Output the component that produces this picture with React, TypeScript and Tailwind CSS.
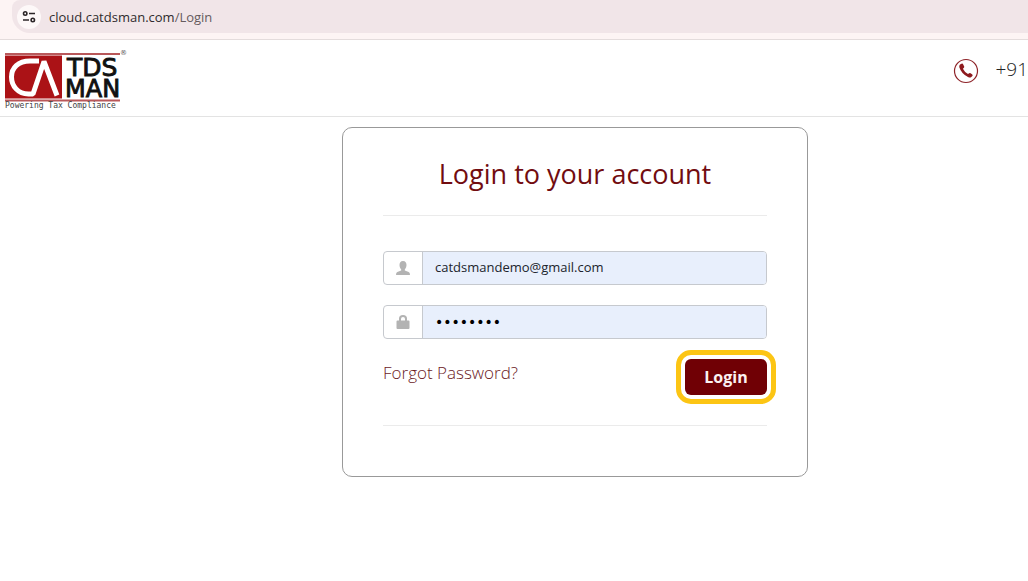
import type { ReactNode } from "react";

function BrowserBar() {
  return (
    <div className="h-10 border-b border-[#e4dcdc] bg-[#fdf4f4]">
      <div className="ml-3 flex h-[33px] items-center gap-2 rounded-tl-[8px] rounded-bl-[18px] bg-[#f1e5e8] pl-[5px]">
        <button type="button" aria-label="View site information" className="flex size-6 items-center justify-center rounded-full bg-[#fdf8f8]">
          <svg viewBox="0 0 14 14" className="size-[14px]" fill="none" stroke="#2b2527" strokeWidth="1.6">
            <circle cx="3.2" cy="3.500" r="1.7" />
            <path d="M7 3.500h6M1 10h6" />
            <circle cx="10.8" cy="10" r="1.7" />
          </svg>
        </button>
        <span className="text-[13px] leading-5 text-[#2f2b2d]">
          cloud.catdsman.com<span className="text-[#655b5e]">/Login</span>
        </span>
      </div>
    </div>
  );
}

function Logo() {
  return (
    <svg viewBox="0 0 124 62" className="h-[62px] w-[124px]" role="img" aria-label="CA TDS Man, Powering Tax Compliance">
      <rect x="1" y="5" width="115" height="2" fill="#b9585a" />
      <rect x="1" y="7.500" width="57" height="43" fill="#ab1216" />
      <rect x="1" y="51.500" width="115" height="2" fill="#b9585a" />
      <path d="M35 13H26C14 13 7.500 20 7.500 29S14 46 24.500 46H29L40 13.500L53 47.500" fill="none" stroke="#fff" strokeWidth="5" strokeLinejoin="bevel" />
      <g fontFamily="'DejaVu Sans', sans-serif" fill="#111">
        <g stroke="#111" strokeWidth="0.9">
          <text x="63" y="28" fontSize="25">TDS</text>
          <text x="61" y="49" fontSize="24">MAN</text>
        </g>
        <text x="1" y="60" fontSize="8" fontFamily="'DejaVu Sans Mono', monospace" fill="#444">Powering Tax Compliance</text>
        <text x="116" y="7" fontSize="7" fill="#555">®</text>
      </g>
    </svg>
  );
}

function Header() {
  return (
    <header className="flex h-[77px] items-start justify-between border-b border-[#e3e3e3]">
      <a href="/" className="mt-2 ml-1">
        <Logo />
      </a>
      <a href="tel:+91" className="mt-[17px] flex items-center gap-4 text-[#222]">
        <svg viewBox="0 0 26 26" className="size-[26px]" aria-hidden="true">
          <circle cx="13" cy="13" r="11.5" fill="#fff" stroke="#8e2328" strokeWidth="1.200" />
          <path d="M7 6.600L9 5.600Q9.800 5.500 10.200 6.400L11.200 8.500Q11.400 9.300 10.700 9.900L9.900 10.700Q11.500 14 15 16L16.200 15.200Q16.900 14.700 17.600 15.200L19.300 16.500Q20 17.200 19.400 17.900L18 19.300Q16.900 20 15 19Q8.500 16 6.300 9.300Q6 7.600 7 6.600Z" fill="#8e1a1e" />
        </svg>
        <span className="pb-1 text-[19px] leading-6 font-light">+91</span>
      </a>
    </header>
  );
}

type FieldProps = { id: string; label: string; type: string; value: string; textClass: string; icon: ReactNode };

function Field({ id, label, type, value, textClass, icon }: FieldProps) {
  return (
    <div className="flex h-[34px] rounded border border-[#c6c9ce]">
      <label htmlFor={id} aria-label={label} className="flex w-[39px] shrink-0 items-center justify-center border-r border-[#c6c9ce] text-[#b3b3b3]">
        {icon}
      </label>
      <input id={id} type={type} defaultValue={value} className={`min-w-0 flex-1 rounded-r-[3px] bg-[#e8effc] px-3 outline-none ${textClass}`} />
    </div>
  );
}

export default function App() {
  return (
    <div className="min-h-screen overflow-x-hidden bg-white font-['Open_Sans','Noto_Sans',sans-serif]">
      <BrowserBar />
      <Header />
      <main className="flex justify-center pt-[10px] pl-[122px]">
        <form onSubmit={(e) => e.preventDefault()} className="w-full max-w-[466px] rounded-[10px] border border-[#999] px-10 pb-[50px]">
          <h1 className="border-b border-[#ebebeb] pt-7 pb-[23px] text-center text-[27px] leading-9 text-[#720c10]">Login to your account</h1>
          <div className="flex flex-col gap-5 pt-[35px]">
            <Field
              id="email"
              label="Email"
              type="email"
              value="catdsmandemo@gmail.com"
              textClass="text-[13px] text-[#20242c]"
              icon={
                <svg viewBox="0 0 16 16" className="size-4" fill="currentColor">
                  <path d="M8 1C5.500 1 4.500 2.700 4.500 5C4.500 6.800 5.200 8.500 6.200 9.400V10.600L2.300 12.100Q1 12.700 1 15H15Q15 12.700 13.700 12.100L9.800 10.600V9.400C10.800 8.500 11.500 6.800 11.500 5C11.500 2.700 10.500 1 8 1Z" />
                </svg>
              }
            />
            <Field
              id="password"
              label="Password"
              type="password"
              value="password"
              textClass="font-['DejaVu_Sans',sans-serif] text-[14px] text-black"
              icon={
                <svg viewBox="0 0 16 16" className="size-4" fill="currentColor">
                  <path fillRule="evenodd" d="M4 6.500V4.500Q4 1 8 1T12 4.500V6.500H13.500Q14.500 6.500 14.500 7.500V14Q14.500 15 13.500 15H2.500Q1.500 15 1.500 14V7.500Q1.500 6.500 2.500 6.500ZM6 6.500H10V5Q10 3 8 3T6 5Z" />
                </svg>
              }
            />
          </div>
          <div className="flex items-start justify-between border-b border-[#ebebeb] pt-5 pb-[30px]">
            <a href="/forgot-password" className="mt-[2px] text-[17px] leading-6 font-light text-[#6b1a1e]">Forgot Password?</a>
            <button type="submit" className="h-9 w-[82px] rounded-md bg-[#700005] text-[16px] font-bold text-[#fbf1f1] outline-5 outline-offset-4 outline-[#fcc514]">
              Login
            </button>
          </div>
        </form>
      </main>
    </div>
  );
}
